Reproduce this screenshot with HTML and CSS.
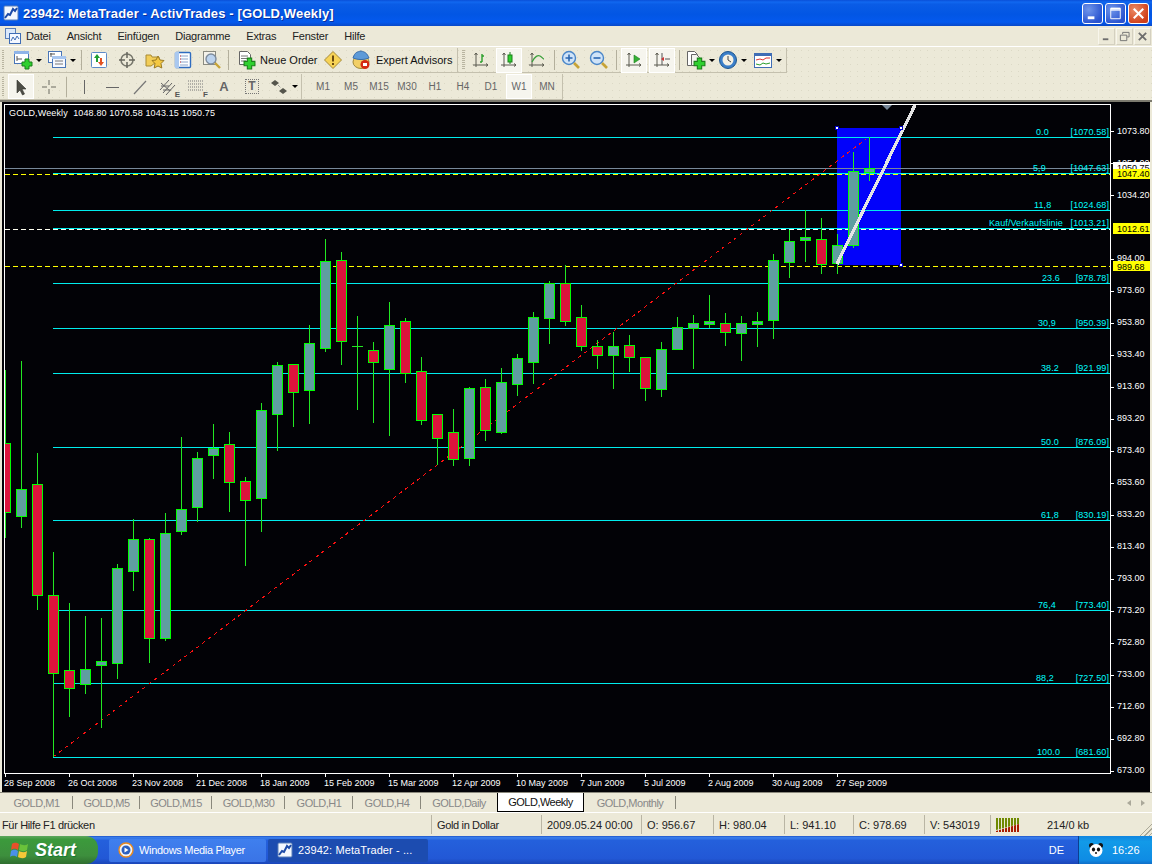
FILE: index.html
```html
<!DOCTYPE html>
<html lang="de">
<head>
<meta charset="utf-8">
<title>23942: MetaTrader - ActivTrades - [GOLD,Weekly]</title>
<link rel="stylesheet" href="styles.css">
</head>
<body>
<svg class="defs" width="0" height="0" aria-hidden="true">
  <defs>
    <symbol id="mt" viewBox="0 0 16 16"><rect x="1" y="1" width="14" height="14" rx="1" fill="#f4f8ff" stroke="#5a7fb8"/><path d="M2 13l3-4 2 1 3-6 2 2 2-3" fill="none" stroke="#1c4aa8" stroke-width="2"/></symbol>
    <symbol id="plus" viewBox="0 0 12 12"><path d="M4 1h4v3h3v4H8v3H4V8H1V4h3z" fill="#2fd02f" stroke="#1b7f1b"/></symbol>
    <symbol id="axes" viewBox="0 0 20 20"><path d="M5 3v14M2 15h15M5 3l-1.500 2M5 3l1.500 2M17 15l-2-1.500M17 15l-2 1.500" fill="none" stroke="#5b5b50"/></symbol>
  </defs>
</svg>

<header class="titlebar">
  <svg class="t-ico"><use href="#mt"/></svg>
  <span class="t-text">23942: MetaTrader - ActivTrades - [GOLD,Weekly]</span>
  <span class="t-btns">
    <span class="wb"><svg viewBox="0 0 20 20"><rect x="5" y="13" width="7" height="3" fill="#fff"/></svg></span>
    <span class="wb"><svg viewBox="0 0 20 20"><path d="M5 4.500h10v11H5zM5 6.500h10" fill="none" stroke="#fff"/><rect x="5" y="4" width="10" height="2" fill="#fff"/></svg></span>
    <span class="wb wb-x"><svg viewBox="0 0 20 20"><path d="M5 5l10 10M15 5L5 15" stroke="#fff" stroke-width="2.200"/></svg></span>
  </span>
</header>

<nav class="menubar">
  <svg class="m-ico" viewBox="0 0 16 16"><rect x="0.500" y="0.500" width="10" height="10" fill="#dbe9fb" stroke="#5a7fb8"/><rect x="4.500" y="5.500" width="11" height="10" fill="#f4f8ff" stroke="#3f6db5"/><path d="M6 13l2-4 2 3 2-4 2 3" fill="none" stroke="#3f6db5"/></svg>
  <span class="m-item">Datei</span><span class="m-item">Ansicht</span><span class="m-item">Einfügen</span><span class="m-item">Diagramme</span><span class="m-item">Extras</span><span class="m-item">Fenster</span><span class="m-item">Hilfe</span>
  <span class="mdi">
    <span class="mb"><svg viewBox="0 0 12 12"><rect x="2" y="8" width="6" height="2" fill="#6e6e6e"/></svg></span>
    <span class="mb"><svg viewBox="0 0 12 12"><path d="M4 3.500V1.500h7v5H9M1.500 4.500h7v6h-7z" fill="none" stroke="#6e6e6e"/></svg></span>
    <span class="mb"><svg viewBox="0 0 12 12"><path d="M2 2l8 8M10 2l-8 8" stroke="#6e6e6e" stroke-width="2"/></svg></span>
  </span>
</nav>

<div class="toolrow">
  <div class="toolbar tb-main">
    <i class="grip"></i>
    <span class="btn dd"><svg class="ico" viewBox="0 0 20 20"><rect x="1.500" y="1.500" width="14" height="12" fill="#fff" stroke="#4a76b8"/><rect x="1" y="1" width="15" height="3" fill="#8fb4e8"/><path d="M4 6v5M4 9h5" stroke="#555"/><use href="#plus" x="8" y="8" width="12" height="12"/></svg><i class="arr"></i></span>
    <span class="btn dd"><svg class="ico" viewBox="0 0 20 20"><rect x="1.500" y="1.500" width="13" height="11" fill="#fff" stroke="#4a76b8"/><rect x="5.500" y="6.500" width="13" height="11" fill="#f6f9ff" stroke="#4a76b8"/><rect x="5" y="6" width="14" height="3" fill="#a8c6ef"/><path d="M8 11h8M8 14h8" stroke="#777"/><path d="M3 4h5M4 3v4" stroke="#555"/></svg><i class="arr"></i></span>
    <i class="sep"></i>
    <span class="btn"><svg class="ico" viewBox="0 0 20 20"><rect x="2.500" y="2.500" width="15" height="15" rx="1" fill="#fff" stroke="#5d8ac8"/><path d="M8 4l-3 4h2v4h2V8h2z" fill="#1f9e2f"/><path d="M12 16l3-4h-2V8h-2v4H9z" fill="#e25222"/></svg></span>
    <span class="btn"><svg class="ico" viewBox="0 0 20 20"><circle cx="10" cy="10" r="6" fill="none" stroke="#77776c" stroke-width="1.500"/><path d="M10 2v6M10 12v6M2 10h6M12 10h6" stroke="#66665c" stroke-width="1.500"/></svg></span>
    <span class="btn"><svg class="ico" viewBox="0 0 20 20"><path d="M1 5h5l1 2h7v3l-8 6H1z" fill="#f2cd58" stroke="#a88a32"/><path d="M13 6l2 4 4 .5-3 3 .8 4.500-3.800-2-3.800 2 .8-4.500-3-3 4-.5z" fill="#f4c842" stroke="#9a7a22"/></svg></span>
    <span class="btn"><svg class="ico" viewBox="0 0 20 20"><rect x="2.500" y="2.500" width="15" height="15" rx="1" fill="#fff" stroke="#2f6cc0" stroke-width="1.400"/><rect x="2" y="2" width="4" height="16" fill="#a9c8ef"/><path d="M7 6h8M7 9h8M7 12h8M7 15h8" stroke="#8aa4cc"/><path d="M7 6h1M7 9h1M7 12h1" stroke="#d33"/></svg></span>
    <span class="btn"><svg class="ico" viewBox="0 0 20 20"><rect x="2.500" y="1.500" width="12" height="13" fill="#f4f2ea" stroke="#8b8b80"/><circle cx="10" cy="9" r="5" fill="#bcd3ee" stroke="#7e8c9c" stroke-width="1.400"/><path d="M14 13l5 5" stroke="#c7a337" stroke-width="2.400"/></svg></span>
    <i class="sep"></i>
    <span class="btn btn-text bt-order"><svg class="ico" viewBox="0 0 20 20"><path d="M3.500 1.500h8l3 3v10h-11z" fill="#fff" stroke="#666"/><path d="M5 6h7M5 8.500h7M5 11h5" stroke="#777"/><use href="#plus" x="7" y="7" width="13" height="13"/></svg><span>Neue Order</span></span>
    <span class="btn"><svg class="ico" viewBox="0 0 20 20"><path d="M10 1.500L18.500 10 10 18.500 1.500 10z" fill="#f7d356" stroke="#a58a3a"/><path d="M10 5.500v6" stroke="#6a4a10" stroke-width="2"/><path d="M10 13v2" stroke="#6a4a10" stroke-width="2"/></svg></span>
    <span class="btn btn-text bt-expert"><svg class="ico" viewBox="0 0 20 20"><ellipse cx="10" cy="12" rx="8" ry="6.500" fill="#f2cf66" stroke="#a08838"/><path d="M2 8c2-6 4-6 8-7 4 1 6 2 8 7-5 2-11 2-16 0z" fill="#5d9ad8" stroke="#3a6ca6"/><circle cx="14" cy="14.500" r="4.500" fill="#d42a12"/><rect x="12" y="13" width="4" height="3" fill="#fff"/></svg><span>Expert Advisors</span></span>
  </div>
  <div class="toolbar tb-charts">
    <i class="grip grip-wide"></i>
    <span class="btn"><svg class="ico" viewBox="0 0 20 20"><use href="#axes" width="20" height="20"/><path d="M11 4v8M9 12h2M11 6h2" stroke="#2a9d2a" stroke-width="1.400" fill="none"/></svg></span>
    <span class="btn on"><svg class="ico" viewBox="0 0 20 20"><use href="#axes" width="20" height="20"/><rect x="9" y="5" width="4" height="7" fill="#2fd02f" stroke="#1b7f1b"/><path d="M11 2v3M11 12v2" stroke="#1b7f1b"/></svg></span>
    <span class="btn"><svg class="ico" viewBox="0 0 20 20"><use href="#axes" width="20" height="20"/><path d="M5 12c3-6 6-7 8-6s3 3 4 3" fill="none" stroke="#3ba03b" stroke-width="1.300"/></svg></span>
    <i class="sep sep-tight"></i>
    <span class="btn"><svg class="ico" viewBox="0 0 20 20"><circle cx="8" cy="8" r="6.500" fill="#cfe3f8" stroke="#4a86c8" stroke-width="1.400"/><path d="M4.500 8h7M8 4.500v7" stroke="#2a66b0" stroke-width="1.600"/><path d="M13 13l5 5" stroke="#c7a337" stroke-width="2.600"/></svg></span>
    <span class="btn"><svg class="ico" viewBox="0 0 20 20"><circle cx="8" cy="8" r="6.500" fill="#cfe3f8" stroke="#4a86c8" stroke-width="1.400"/><path d="M4.500 8h7" stroke="#2a66b0" stroke-width="1.600"/><path d="M13 13l5 5" stroke="#c7a337" stroke-width="2.600"/></svg></span>
    <i class="sep"></i>
    <span class="btn on"><svg class="ico" viewBox="0 0 20 20"><use href="#axes" width="20" height="20"/><path d="M10 5l6 4-6 4z" fill="#35b035" stroke="#1b7f1b" stroke-width=".6"/></svg></span>
    <span class="btn on"><svg class="ico" viewBox="0 0 20 20"><use href="#axes" width="20" height="20"/><path d="M10 3v12M13 9h5" stroke="#555"/><path d="M12 7l-3 2 3 2z" fill="#c33"/></svg></span>
    <i class="sep"></i>
    <span class="btn dd dd-narrow"><svg class="ico" viewBox="0 0 20 20"><path d="M1.500 1.500h7l3 3v11h-10z" fill="#fff" stroke="#666"/><path d="M5.500 4.500h5l3 3v8h-8z" fill="#f4f4f0" stroke="#666"/><use href="#plus" x="7" y="7" width="13" height="13"/></svg><i class="arr"></i></span>
    <span class="btn dd dd-wide"><svg class="ico" viewBox="0 0 20 20"><circle cx="10" cy="10" r="8.500" fill="#3b7fc9" stroke="#1e568f"/><circle cx="10" cy="10" r="5.500" fill="#f5f1e3"/><path d="M10 6v4l3 2" fill="none" stroke="#444"/></svg><i class="arr"></i></span>
    <span class="btn dd"><svg class="ico" viewBox="0 0 20 20"><rect x="1.500" y="3.500" width="17" height="14" fill="#fff" stroke="#3f6db5"/><rect x="1" y="3" width="18" height="3" fill="#3f6db5"/><path d="M3 10l4-1 3 1 3-2 4 0" fill="none" stroke="#d33"/><path d="M3 14l4 1 3-2 3 1 4-1" fill="none" stroke="#2a9d2a"/></svg><i class="arr"></i></span>
  </div>
</div>

<div class="toolrow row-two">
  <div class="toolbar tb-draw">
    <i class="grip"></i>
    <span class="btn on"><svg class="ico" viewBox="0 0 20 20"><path d="M6 3v13l3-3 2.500 5 2-1-2.500-5h4z" fill="#4d4d46" stroke="#33332e" stroke-width=".6"/></svg></span>
    <span class="btn"><svg class="ico" viewBox="0 0 20 20"><path d="M10 3v5M10 12v5M3 10h5M12 10h5" stroke="#6a6a60"/></svg></span>
    <i class="sep"></i>
    <span class="btn"><svg class="ico" viewBox="0 0 20 20"><path d="M10.500 3v14" stroke="#666"/></svg></span>
    <span class="btn"><svg class="ico" viewBox="0 0 20 20"><path d="M4 10.500h13" stroke="#666"/></svg></span>
    <span class="btn"><svg class="ico" viewBox="0 0 20 20"><path d="M4 17L16 4" stroke="#777" stroke-width="1.200"/></svg></span>
    <span class="btn"><svg class="ico" viewBox="0 0 20 20"><path d="M2 13L11 3M5 16l9-10M8 18l9-10M3 9h8M5 13h8M3 6l9 8" stroke="#666" fill="none"/></svg><b class="ico-l">E</b></span>
    <span class="btn"><svg class="ico" viewBox="0 0 20 20"><path d="M2 4h15M2 7h15M2 10h15M2 13h15" stroke="#777" stroke-dasharray="1 1"/></svg><b class="ico-l">F</b></span>
    <span class="btn ltr">A</span>
    <span class="btn"><span class="ltr-box">T</span></span>
    <span class="btn dd dd-draw"><svg class="ico" viewBox="0 0 20 20"><path d="M6 3l4 3-4 3-4-3zM14 11l4 3-4 3-4-3z" fill="#55554c"/><path d="M9 8l3 3" stroke="#777" stroke-dasharray="1 1"/></svg><i class="arr"></i></span>
  </div>
  <div class="toolbar tb-periods">
    <span class="btn per">M1</span><span class="btn per">M5</span><span class="btn per">M15</span><span class="btn per">M30</span><span class="btn per">H1</span><span class="btn per">H4</span><span class="btn per">D1</span><span class="btn per on">W1</span><span class="btn per">MN</span>
  </div>
</div>

<main class="chart-wrap">
<svg class="chart" width="1148" height="690" viewBox="2 102 1148 690" role="img" aria-label="GOLD,Weekly">
  <rect x="2" y="102" width="1148" height="690" fill="#020206"/>
  <rect x="837" y="128" width="64" height="137" fill="#0202fa"/>

  <path class="fib" d="M53 137.500H1110M53 173.500H1110M53 210.500H1110M53 228.500H1110M53 283.500H1110M53 328.500H1110M53 373.500H1110M53 447.500H1110M53 520.500H1110M53 610.500H1110M53 683.500H1110M53 757.500H1110"/>
  <path class="lvl-y" d="M5 174.500H1110M5 266.500H1110"/>
  <path class="lvl-w" d="M5 229.500H1110"/>
  <path class="bid" d="M5 168.500H1110"/>
  <path class="trend" d="M53 757L866 139"/>

  <path class="wick" d="M5.500 370V538M21.500 361V528M37.500 453V610M53.500 552V757M69.500 603V717M85.500 616V694M101.500 618V728M117.500 564V679M133.500 519V591M149.500 538V663M165.500 513V641M181.500 437V535M197.500 452V522M213.500 424V479M229.500 432V512M245.500 477V566M261.500 403V532M277.500 362V451M293.500 364V427M309.500 325V424M325.500 239V352M341.500 252V365M357.500 316V410M352 346.500H363M373.500 342V423M389.500 302V436M405.500 318V383M421.500 357V425M437.500 414V465M453.500 409V466M469.500 387V466M485.500 379V441M501.500 368V434M517.500 354V396M533.500 312V384M549.500 281V344M565.500 265V326M581.500 305V351M597.500 340V369M613.500 332V389M629.500 335V372M645.500 357V401M661.500 342V397M677.500 317V349M693.500 315V369M709.500 295V328M725.500 313V346M741.500 316V361M757.500 312V347M773.500 254V339M789.500 230V278M805.500 210V262M821.500 218V274M837.500 234V274M853.500 152V248M869.500 137V181"/>
  <path class="bull" d="M16.500 489.500h10v27h-10zM80.500 669.500h10v15h-10zM96.500 661.500h10v4h-10zM112.500 568.500h10v95h-10zM128.500 539.500h10v32h-10zM160.500 533.500h10v105h-10zM176.500 509.500h10v22h-10zM192.500 458.500h10v49h-10zM208.500 448.500h10v7h-10zM256.500 410.500h10v88h-10zM272.500 365.500h10v49h-10zM304.500 343.500h10v47h-10zM320.500 261.500h10v87h-10zM384.500 325.500h10v44h-10zM464.500 388.500h10v70h-10zM496.500 382.500h10v50h-10zM512.500 358.500h10v26h-10zM528.500 317.500h10v45h-10zM544.500 283.500h10v35h-10zM608.500 346.500h10v9h-10zM656.500 349.500h10v40h-10zM672.500 327.500h10v22h-10zM688.500 323.500h10v5h-10zM704.500 321.500h10v3h-10zM736.500 323.500h10v10h-10zM752.500 321.500h10v3h-10zM768.500 260.500h10v60h-10zM784.500 241.500h10v21h-10zM800.500 237.500h10v3h-10zM832.500 245.500h10v18h-10zM848.500 171.500h10v74h-10zM864.500 168.500h10v4h-10z"/>
  <path class="bear" d="M0.500 443.500h10v69h-10zM32.500 484.500h10v111h-10zM48.500 595.500h10v78h-10zM64.500 670.500h10v18h-10zM144.500 539.500h10v99h-10zM224.500 444.500h10v38h-10zM240.500 481.500h10v19h-10zM288.500 364.500h10v28h-10zM336.500 260.500h10v81h-10zM368.500 350.500h10v12h-10zM400.500 321.500h10v52h-10zM416.500 371.500h10v49h-10zM432.500 414.500h10v24h-10zM448.500 432.500h10v27h-10zM480.500 387.500h10v43h-10zM560.500 283.500h10v38h-10zM576.500 317.500h10v29h-10zM592.500 346.500h10v9h-10zM624.500 345.500h10v12h-10zM640.500 357.500h10v31h-10zM720.500 323.500h10v9h-10zM816.500 239.500h10v25h-10z"/>

  <path class="arrow" d="M837 264L915 105"/>
  <path class="handle" d="M835.500 126.500h3v3h-3zM899.500 126.500h3v3h-3zM899.500 263.500h3v3h-3z"/>
  <polygon class="shift" points="882,105 892,105 887,110"/>

  <rect x="2" y="102" width="2" height="690" fill="#020206"/>
  <path class="frame" d="M4.500 104.500H1110.500V773.500H4.500ZM1111 131.500h3M1111 163.500h3M1111 195.500h3M1111 259.500h3M1111 291.500h3M1111 323.500h3M1111 355.500h3M1111 387.500h3M1111 419.500h3M1111 451.500h3M1111 483.500h3M1111 515.500h3M1111 547.500h3M1111 579.500h3M1111 611.500h3M1111 643.500h3M1111 675.500h3M1111 707.500h3M1111 739.500h3M1111 771.500h3M5.500 774v3M69.500 774v3M133.500 774v3M197.500 774v3M261.500 774v3M325.500 774v3M389.500 774v3M453.500 774v3M517.500 774v3M581.500 774v3M645.500 774v3M709.500 774v3M773.500 774v3M837.500 774v3"/>

  <text class="lbl head" x="9" y="116">GOLD,Weekly  1048.80 1070.58 1043.15 1050.75</text>

  <g class="fibtxt">
    <text x="1036" y="135">0.0</text><text class="r" x="1109" y="135">[1070.58]</text>
    <text x="1033" y="171">5,9</text><text class="r" x="1109" y="171">[1047.63]</text>
    <text x="1034" y="208">11,8</text><text class="r" x="1109" y="208">[1024.68]</text>
    <text x="989" y="226">Kauf/Verkaufslinie</text><text class="r" x="1109" y="226">[1013.21]</text>
    <text x="1042" y="281">23.6</text><text class="r" x="1109" y="281">[978.78]</text>
    <text x="1038" y="326">30,9</text><text class="r" x="1109" y="326">[950.39]</text>
    <text x="1041" y="371">38.2</text><text class="r" x="1109" y="371">[921.99]</text>
    <text x="1041" y="445">50.0</text><text class="r" x="1109" y="445">[876.09]</text>
    <text x="1041" y="518">61,8</text><text class="r" x="1109" y="518">[830.19]</text>
    <text x="1038" y="608">76,4</text><text class="r" x="1109" y="608">[773.40]</text>
    <text x="1036" y="681">88,2</text><text class="r" x="1109" y="681">[727.50]</text>
    <text x="1037" y="755">100.0</text><text class="r" x="1109" y="755">[681.60]</text>
  </g>

  <g class="lbl">
    <text x="1117" y="134">1073.80</text><text x="1117" y="166">1054.00</text><text x="1117" y="198">1034.20</text>
    <text x="1117" y="261">994.00</text><text x="1117" y="293">973.60</text><text x="1117" y="325">953.80</text>
    <text x="1117" y="357">933.40</text><text x="1117" y="389">913.60</text><text x="1117" y="421">893.20</text>
    <text x="1117" y="453">873.40</text><text x="1117" y="485">853.60</text><text x="1117" y="517">833.20</text>
    <text x="1117" y="549">813.40</text><text x="1117" y="581">793.00</text><text x="1117" y="613">773.20</text>
    <text x="1117" y="645">752.80</text><text x="1117" y="677">733.00</text><text x="1117" y="709">712.60</text>
    <text x="1117" y="741">692.80</text><text x="1117" y="773">673.00</text>
  </g>

  <rect class="tag-w" x="1113" y="162" width="38" height="8"/>
  <text class="tagtxt" x="1117" y="171">1050.75</text>
  <rect class="tag" x="1113" y="169" width="38" height="10"/>
  <text class="tagtxt" x="1117" y="177">1047.40</text>
  <rect class="tag" x="1113" y="223" width="38" height="11"/>
  <text class="tagtxt" x="1117" y="232">1012.61</text>
  <rect class="tag" x="1113" y="261" width="38" height="10"/>
  <text class="tagtxt" x="1117" y="270">989.68</text>

  <g class="lbl">
    <text x="4" y="786">28 Sep 2008</text><text x="68" y="786">26 Oct 2008</text><text x="132" y="786">23 Nov 2008</text>
    <text x="196" y="786">21 Dec 2008</text><text x="260" y="786">18 Jan 2009</text><text x="324" y="786">15 Feb 2009</text>
    <text x="388" y="786">15 Mar 2009</text><text x="452" y="786">12 Apr 2009</text><text x="516" y="786">10 May 2009</text>
    <text x="580" y="786">7 Jun 2009</text><text x="644" y="786">5 Jul 2009</text><text x="708" y="786">2 Aug 2009</text>
    <text x="772" y="786">30 Aug 2009</text><text x="836" y="786">27 Sep 2009</text>
  </g>
</svg>
</main>

<div class="tabs">
  <span class="tab">GOLD,M1</span><span class="tab">GOLD,M5</span><span class="tab">GOLD,M15</span><span class="tab">GOLD,M30</span><span class="tab">GOLD,H1</span><span class="tab">GOLD,H4</span><span class="tab tab-pre">GOLD,Daily</span><span class="tab tab-on">GOLD,Weekly</span><span class="tab">GOLD,Monthly</span>
  <span class="scroll"><i class="sc-l"></i><i class="sc-r"></i></span>
</div>

<div class="status">
  <span class="cell cell-txt">Für Hilfe F1 drücken</span>
  <span class="cell cell-txt">Gold in Dollar</span>
  <span class="cell">2009.05.24 00:00</span>
  <span class="cell">O: 956.67</span>
  <span class="cell">H: 980.04</span>
  <span class="cell">L: 941.10</span>
  <span class="cell">C: 978.69</span>
  <span class="cell">V: 543019</span>
  <span class="cell cell-net">
    <svg class="net" viewBox="0 0 23 14"><path d="M0 0h23v6l-23 6z" fill="#6f8a00"/><path d="M0 13l23-7v8H0z" fill="#a81c00"/><path d="M2.500 0v14M5.500 0v14M8.500 0v14M11.500 0v14M14.500 0v14M17.500 0v14M20.500 0v14" stroke="#ece9d8"/></svg>
    <span class="kb">214/0 kb</span>
    <i class="resize"></i>
  </span>
</div>

<footer class="taskbar">
  <span class="start">
    <svg class="flag" viewBox="0 0 20 20"><path d="M2 4c3-2 5-1 7 0l-1 6c-2-1-4-2-7 0z" fill="#e8502a"/><path d="M10 4c2 1 5 2 8 0l-1 6c-3 2-6 1-8 0z" fill="#6ac23a"/><path d="M1 11c3-2 5-1 7 0l-1 6c-2-1-4-2-7 0z" fill="#4a90e8"/><path d="M9 11c2 1 5 2 8 0l-1 6c-3 2-6 1-8 0z" fill="#f6c838"/></svg>
    <span>Start</span>
  </span>
  <span class="task">
    <svg class="task-ico" viewBox="0 0 16 16"><circle cx="8" cy="8" r="7" fill="#f4f4f4" stroke="#e88a20" stroke-width="1.400"/><circle cx="8" cy="8" r="4.500" fill="#2a5fc0"/><path d="M6.500 5.500l4 2.500-4 2.500z" fill="#fff"/></svg>
    <span>Windows Media Player</span>
  </span>
  <span class="task task-on">
    <svg class="task-ico"><use href="#mt"/></svg>
    <span>23942: MetaTrader - ...</span>
  </span>
  <span class="lang">DE</span>
  <span class="tray">
    <svg class="panda" viewBox="0 0 16 16"><circle cx="3.500" cy="3.500" r="2.500" fill="#111"/><circle cx="12.500" cy="3.500" r="2.500" fill="#111"/><circle cx="8" cy="8.500" r="6.500" fill="#fff"/><ellipse cx="5.500" cy="7.500" rx="1.600" ry="2" fill="#111"/><ellipse cx="10.500" cy="7.500" rx="1.600" ry="2" fill="#111"/><circle cx="8" cy="11" r="1" fill="#111"/></svg>
    <span>16:26</span>
  </span>
</footer>
</body>
</html>
```

FILE: styles.css
```css
* { box-sizing: border-box; }
html, body { margin: 0; padding: 0; }
body {
  width: 1152px;
  height: 864px;
  overflow: hidden;
  background: #ece9d8;
  font: 11px "Liberation Sans", Arial, sans-serif;
  color: #000;
}
.defs { position: absolute; }
svg { display: block; }

/* Title bar */
.titlebar {
  height: 26px;
  display: flex;
  align-items: center;
  padding: 0 3px;
  background: linear-gradient(#0a4fd8 0, #1168f0 8%, #0a5ce6 16%, #0256e4 55%, #0459ee 85%, #0a49c8 100%);
}
.t-ico { width: 16px; height: 16px; }
.t-text {
  margin-left: 4px;
  color: #fff;
  font-size: 13px;
  font-weight: 700;
  letter-spacing: .14px;
  text-shadow: 1px 1px 0 #0b2f9c;
}
.t-btns { margin-left: auto; display: flex; gap: 2px; }
.wb {
  width: 21px;
  height: 21px;
  border: 1px solid #fff;
  border-radius: 3px;
  background: radial-gradient(circle at 30% 30%, #6f95ea, #2a54d0 75%);
}
.wb-x { background: radial-gradient(circle at 30% 30%, #ec8a64, #d0401a 75%); }

/* Menu bar */
.menubar {
  height: 21px;
  display: flex;
  align-items: center;
  padding-left: 5px;
  background: #ece9d8;
  border-bottom: 1px solid #fff;
}
.m-ico { width: 16px; height: 16px; margin-right: 5px; }
.m-item { margin-right: 16px; letter-spacing: -.2px; color: #222; }
.mdi { margin-left: auto; display: flex; gap: 1px; margin-right: 1px; }
.mb {
  width: 17px;
  height: 17px;
  padding: 2px;
  border: 1px solid #f8f6ec;
  border-right-color: #d4d0c0;
  border-bottom-color: #d4d0c0;
}

/* Toolbars */
.toolrow {
  height: 26px;
  display: flex;
  padding-top: 1px;
  background-color: #ece9d8;
  background-image: radial-gradient(#dcd9c6 .7px, transparent .8px);
  background-size: 7px 7px;
}
.row-two { height: 27px; }
.toolbar {
  display: flex;
  align-items: center;
  height: 100%;
  border-right: 1px solid #c4c0ae;
  border-bottom: 1px solid #c4c0ae;
}
.tb-main { width: 458px; padding-left: 2px; }
.tb-charts { width: 329px; padding-left: 4px; }
.tb-draw { width: 302px; padding-left: 2px; }
.tb-periods { width: 261px; padding-left: 7px; }
.grip {
  width: 2px;
  height: 20px;
  margin-right: 3px;
  background: repeating-linear-gradient(#b8b4a0 0 1px, transparent 1px 2px);
}
.tb-main > .grip { margin-right: 6px; }
.grip-wide { width: 3px; margin-right: 2px; }
.sep { width: 1px; height: 20px; margin: 0 3px; background: #b3af9c; }
.sep-tight { margin-right: 2px; }
.btn {
  flex: none;
  width: 28px;
  height: 25px;
  display: flex;
  align-items: center;
  justify-content: center;
  position: relative;
}
.btn.on {
  background: #f6f5ee;
  box-shadow: inset 1px 1px 0 #b8b4a2, inset -1px -1px 0 #fff;
  outline: 1px solid #fff;
  outline-offset: -1px;
  width: 26px;
  margin: 0 1px;
}
.dd { width: 34px; justify-content: flex-start; padding-left: 3px; }
.dd-narrow { width: 32px; }
.dd-wide { width: 35px; }
.dd-draw { width: 30px; }
.arr {
  margin-left: 3px;
  border-left: 3px solid transparent;
  border-right: 3px solid transparent;
  border-top: 3px solid #000;
}
.ico { width: 20px; height: 20px; flex: none; }
.ico-l {
  position: absolute;
  right: 2px;
  bottom: 0;
  font-size: 8px;
  color: #555;
}
.ltr { font-size: 13px; font-weight: 700; color: #666; }
.ltr-box {
  width: 14px;
  height: 15px;
  border: 1px dotted #777;
  font-size: 12px;
  line-height: 13px;
  font-weight: 700;
  color: #666;
  text-align: center;
}
.btn-text { justify-content: flex-start; padding-left: 4px; }
.bt-order { width: 87px; gap: 4px; color: #111; }
.bt-expert { width: 108px; gap: 5px; color: #111; }
.per { width: 28px; color: #666; font-size: 10px; }

/* Chart */
.chart-wrap {
  height: 692px;
  padding: 0 2px;
  background: #ece9d8;
  border-top: 2px solid #7c7a6e;
}
.fib { stroke: #00ecec; fill: none; shape-rendering: crispEdges; }
.lvl-y { stroke: #ffff00; stroke-dasharray: 5 3; fill: none; shape-rendering: crispEdges; }
.lvl-w { stroke: #fffff0; stroke-dasharray: 5 3; fill: none; shape-rendering: crispEdges; }
.bid { stroke: #778899; fill: none; shape-rendering: crispEdges; }
.trend { stroke: #ff1010; stroke-dasharray: 3.500 4; fill: none; shape-rendering: crispEdges; }
.wick { stroke: #22e822; fill: none; shape-rendering: crispEdges; }
.bull { fill: #5f9ea0; stroke: #00ff00; shape-rendering: crispEdges; }
.bear { fill: #dc143c; stroke: #00ff00; shape-rendering: crispEdges; }
.arrow { stroke: #e4e4e4; stroke-width: 3.200; fill: none; shape-rendering: crispEdges; }
.handle { fill: #fff; stroke: #0000c8; shape-rendering: crispEdges; }
.shift { fill: #778899; }
.frame { stroke: #fff; fill: none; shape-rendering: crispEdges; }
.lbl { fill: #fff; font-size: 9px; white-space: pre; }
.head { letter-spacing: .14px; }
.fibtxt { fill: #00ffff; font-size: 9px; letter-spacing: .1px; }
.r { text-anchor: end; }
.tag { fill: #ffff00; }
.tag-w { fill: #fff; }
.tagtxt { fill: #000; font-size: 9px; }

/* Tabs */
.tabs {
  height: 21px;
  display: grid;
  grid-template-columns: 73px 67px 72px 73px 68px 68px 76px 87px 92px 1fr;
  align-items: stretch;
  background-color: #ece9d8;
  border-top: 1px solid #8a887c;
  box-shadow: inset 0 -1px 0 #fff;
}
.tab {
  display: flex;
  align-items: center;
  justify-content: center;
  color: #888;
  letter-spacing: -.5px;
  position: relative;
}
.tab::after {
  content: "";
  position: absolute;
  right: 0;
  top: 3px;
  bottom: 4px;
  width: 1px;
  background: #8a887c;
}
.tab-pre::after, .tab-on::after { display: none; }
.tab-on {
  background: #fff;
  color: #111;
  border: 1px solid #000;
  border-top: 0;
  margin-bottom: 1px;
}
.scroll { display: flex; align-items: center; justify-content: flex-end; gap: 10px; padding-right: 7px; }
.sc-l { border: 3px solid transparent; border-left: 0; border-right: 4px solid #aaa89a; }
.sc-r { border: 3px solid transparent; border-right: 0; border-left: 4px solid #aaa89a; }

/* Status bar */
.status {
  height: 23px;
  display: grid;
  grid-template-columns: 431px 110px 100px 72px 71px 69px 71px 66px 1fr;
  background: #ece9d8;
}
.cell {
  display: flex;
  align-items: center;
  padding-left: 5px;
  border-left: 1px solid #b9b5a4;
  margin: 2px 0;
  color: #222;
}
.cell:first-child { border-left: 0; padding-left: 2px; }
.cell-txt { letter-spacing: -.35px; }
.cell-net { position: relative; }
.net { width: 23px; height: 14px; }
.kb { margin-left: 28px; }
.resize {
  position: absolute;
  right: 0;
  bottom: -2px;
  width: 14px;
  height: 14px;
  background: repeating-linear-gradient(135deg, transparent 0 2px, #aaa898 2px 3px);
  clip-path: polygon(100% 0, 100% 100%, 0 100%);
}

/* Taskbar */
.taskbar {
  height: 28px;
  display: flex;
  align-items: center;
  background: linear-gradient(#1f55c8 0, #3a80ee 6%, #2460dc 16%, #2258d6 80%, #1a46b8 100%);
  color: #fff;
}
.start {
  width: 98px;
  height: 28px;
  display: flex;
  align-items: center;
  gap: 5px;
  padding-left: 10px;
  background: linear-gradient(#5fa85f 0, #3c9a3c 12%, #3d8f3d 70%, #2f6e2f 100%);
  border-radius: 0 12px 12px 0;
  font-size: 18px;
  font-weight: 700;
  font-style: italic;
  text-shadow: 1px 1px 1px #173;
}
.flag { width: 20px; height: 20px; }
.task {
  height: 23px;
  display: flex;
  align-items: center;
  gap: 5px;
  width: 157px;
  margin-left: 11px;
  padding-left: 9px;
  border-radius: 2px;
  background: linear-gradient(#3f7fee, #3a74e6);
  white-space: nowrap;
  letter-spacing: -.3px;
}
.task-on {
  width: 160px;
  margin-left: 2px;
  background: #1c4cb0;
  letter-spacing: .1px;
}
.task-ico { width: 16px; height: 16px; flex: none; }
.lang { margin-left: auto; margin-right: 14px; font-size: 11px; }
.tray {
  width: 74px;
  height: 28px;
  display: flex;
  align-items: center;
  gap: 8px;
  padding-left: 9px;
  background: linear-gradient(#1086e0, #129ae8 20%, #0f8ce4 85%, #0f6ec8);
  border-left: 1px solid #0c3f90;
}
.panda { width: 16px; height: 16px; }
```
